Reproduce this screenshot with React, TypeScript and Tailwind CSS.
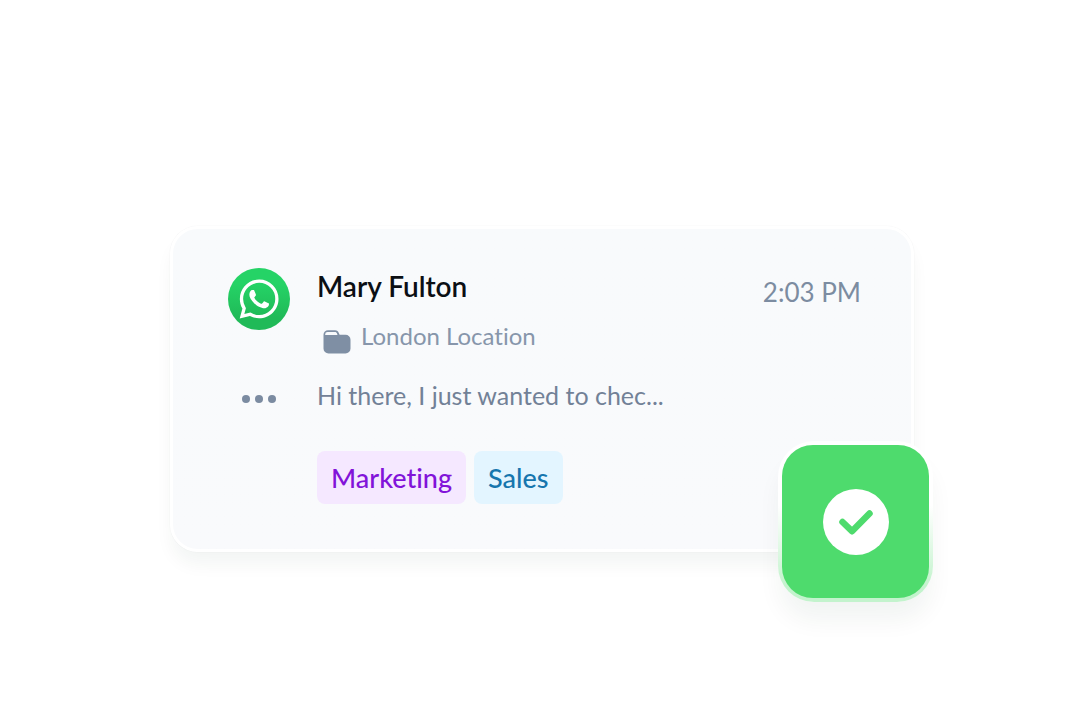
function WhatsAppIcon() {
  return (
    <svg viewBox="0 0 62 62" className="size-[62px]" role="img" aria-label="WhatsApp">
      <defs>
        <linearGradient id="wa" x1="0" y1="0" x2="0" y2="1">
          <stop offset="0.25" stopColor="#25d366" />
          <stop offset="0.8" stopColor="#20ba58" />
        </linearGradient>
      </defs>
      <circle cx="31" cy="31" r="31" fill="url(#wa)" />
      <g transform="translate(11.6 11.6) scale(1.625)" fill="#fff">
        <path d="M17.472 14.382c-.297-.149-1.758-.867-2.03-.967-.273-.099-.471-.148-.67.15-.197.297-.767.966-.94 1.164-.173.199-.347.223-.644.075-.297-.15-1.255-.463-2.39-1.475-.883-.788-1.48-1.761-1.653-2.059-.173-.297-.018-.458.13-.606.134-.133.298-.347.446-.52.149-.174.198-.298.298-.497.099-.198.05-.371-.025-.52-.075-.149-.669-1.612-.916-2.207-.242-.579-.487-.5-.669-.51-.173-.008-.371-.01-.57-.01-.198 0-.52.074-.792.372-.272.297-1.04 1.016-1.04 2.479 0 1.462 1.065 2.875 1.213 3.074.149.198 2.096 3.2 5.077 4.487.709.306 1.262.489 1.694.625.712.227 1.36.195 1.871.118.571-.085 1.758-.719 2.006-1.413.248-.694.248-1.289.173-1.413-.074-.124-.272-.198-.57-.347m-5.421 7.403h-.004a9.87 9.87 0 01-5.031-1.378l-.361-.214-3.741.982.998-3.648-.235-.374a9.86 9.86 0 01-1.51-5.26c.001-5.45 4.436-9.884 9.888-9.884 2.64 0 5.122 1.03 6.988 2.898a9.825 9.825 0 012.893 6.994c-.003 5.45-4.437 9.884-9.885 9.884m8.413-18.297A11.815 11.815 0 0012.05 0C5.495 0 .16 5.335.157 11.892c0 2.096.547 4.142 1.588 5.945L.057 24l6.305-1.654a11.882 11.882 0 005.683 1.448h.005c6.554 0 11.89-5.335 11.893-11.893a11.821 11.821 0 00-3.48-8.413Z" />
      </g>
    </svg>
  );
}

function FolderIcon() {
  return (
    <svg viewBox="0 0 28 24" className="h-6 w-7" aria-hidden="true">
      <path
        fillRule="evenodd"
        fill="#7f8fa4"
        d="M5 .3H12C14.2 .3 15.2 1.400 15.700 2.800L16.600 4.800H22.500A5 5 0 0 1 27.500 9.800V18.500A5 5 0 0 1 22.500 23.500H5.500A5 5 0 0 1 .5 18.500V4.800A4.500 4.500 0 0 1 5 .3ZM4.500 1.900A2.300 2.300 0 0 0 2.200 4.200V4.900H14.500L13.800 3.100C13.400 2.200 12.900 1.900 12 1.900Z"
      />
    </svg>
  );
}

function StatusTile() {
  return (
    <div className="absolute -right-[22px] -bottom-[53px] rounded-[36px] bg-linear-to-b from-white from-40% to-[#c3f3cd] to-90% p-1 shadow-[0_20px_24px_-2px_rgba(20,60,40,0.055)]">
      <div className="flex h-[153px] w-[147px] items-center justify-center rounded-[31px] bg-[#4edb6d]">
        <svg viewBox="0 0 66 66" className="size-[66px]" role="img" aria-label="Done">
          <circle cx="33" cy="33" r="33" fill="#fff" />
          <path
            d="M19.500 33L29 42.200L46.500 24.500"
            fill="none"
            stroke="#4edb6d"
            strokeWidth="6.500"
            strokeLinecap="round"
            strokeLinejoin="round"
          />
        </svg>
      </div>
    </div>
  );
}

export default function App() {
  return (
    <main className="min-h-screen bg-white pt-[226px] pr-4 pb-24 pl-5 font-['Lato',sans-serif] [font-variant-ligatures:none]">
      <article className="relative mx-auto w-full max-w-[744px] rounded-[28px] border-[3px] border-white bg-linear-to-b from-[#f8fafc] to-[#f9fafc] pt-[39px] pr-[50px] pb-[45px] pl-[55px] shadow-[0_0_1px_rgba(15,30,45,0.12),0_14px_18px_-2px_rgba(20,50,40,0.05)]">
        <div className="flex gap-[27px]">
          <div className="flex flex-col items-center gap-[57px]">
            <WhatsAppIcon />
            <button type="button" aria-label="More options" className="flex h-6 items-center gap-[5px]">
              <span className="size-2 rounded-full bg-[#7b8ba1]" />
              <span className="size-2 rounded-full bg-[#7b8ba1]" />
              <span className="size-2 rounded-full bg-[#7b8ba1]" />
            </button>
          </div>
          <div className="min-w-0 flex-1">
            <div className="flex h-9 items-start justify-between">
              <h2 className="text-[28px] leading-9 font-semibold text-[#0b0f14]">Mary Fulton</h2>
              <time className="mt-1.5 text-[26px] leading-9 text-[#7c8ca1]">2:03 PM</time>
            </div>
            <div className="mt-4 flex h-8 items-start gap-2.5 pl-1.5">
              <span className="pt-2.5">
                <FolderIcon />
              </span>
              <span className="text-[24px] leading-8 text-[#8796ab]">London Location</span>
            </div>
            <p className="mt-[27px] truncate text-[25px] leading-8 text-[#728197]">
              Hi there, I just wanted to chec...
            </p>
            <ul className="mt-10 flex gap-2 text-[27px] leading-[53px] font-medium">
              <li className="rounded-lg bg-[#f5e8ff] px-3.5 text-[#8213d9]">Marketing</li>
              <li className="rounded-lg bg-[#e3f5ff] px-3.5 text-[#1676ae]">Sales</li>
            </ul>
          </div>
        </div>
        <StatusTile />
      </article>
    </main>
  );
}
